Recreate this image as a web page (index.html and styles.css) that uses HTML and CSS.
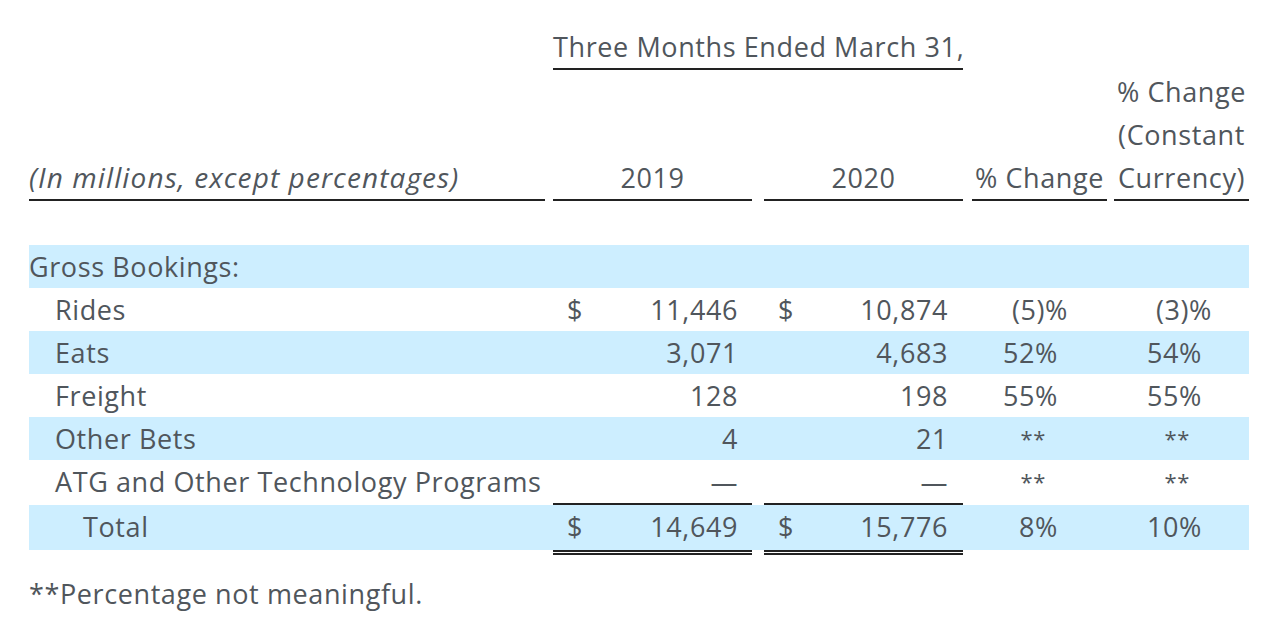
FILE: index.html
```html
<!DOCTYPE html>
<html lang="en">
<head>
<meta charset="utf-8">
<title>Gross Bookings</title>
<link rel="stylesheet" href="styles.css">
</head>
<body>
<div class="page">
  <div class="grid head">
    <div class="c lab"></div>
    <div class="c span2 ul center">Three Months Ended March 31,</div>
    <div class="c pct"></div>
    <div class="c ccy"></div>

    <div class="c lab ul italic">(In millions, except percentages)</div>
    <div class="c y1 ul center">2019</div>
    <div class="c y2 ul center">2020</div>
    <div class="c pct ul center">% Change</div>
    <div class="c ccy ul center">% Change<br>(Constant<br>Currency)</div>
  </div>

  <div class="spacer"></div>

  <div class="grid row blue">
    <div class="c lab">Gross Bookings:</div>
    <div class="c y1"></div>
    <div class="c y2"></div>
    <div class="c pct"></div>
    <div class="c ccy"></div>
  </div>

  <div class="grid row">
    <div class="c lab sub">Rides</div>
    <div class="c y1 num"><span>$</span><span>11,446</span></div>
    <div class="c y2 num"><span>$</span><span>10,874</span></div>
    <div class="c pct val"><span class="neg">(5)%</span></div>
    <div class="c ccy val"><span class="neg">(3)%</span></div>
  </div>

  <div class="grid row blue">
    <div class="c lab sub">Eats</div>
    <div class="c y1 num"><span></span><span>3,071</span></div>
    <div class="c y2 num"><span></span><span>4,683</span></div>
    <div class="c pct val"><span>52%</span></div>
    <div class="c ccy val"><span>54%</span></div>
  </div>

  <div class="grid row">
    <div class="c lab sub">Freight</div>
    <div class="c y1 num"><span></span><span>128</span></div>
    <div class="c y2 num"><span></span><span>198</span></div>
    <div class="c pct val"><span>55%</span></div>
    <div class="c ccy val"><span>55%</span></div>
  </div>

  <div class="grid row blue">
    <div class="c lab sub">Other Bets</div>
    <div class="c y1 num"><span></span><span>4</span></div>
    <div class="c y2 num"><span></span><span>21</span></div>
    <div class="c pct val"><span class="nm">**</span></div>
    <div class="c ccy val"><span class="nm">**</span></div>
  </div>

  <div class="grid row">
    <div class="c lab sub">ATG and Other Technology Programs</div>
    <div class="c y1 num ul"><span></span><span>—</span></div>
    <div class="c y2 num ul"><span></span><span>—</span></div>
    <div class="c pct val"><span class="nm">**</span></div>
    <div class="c ccy val"><span class="nm">**</span></div>
  </div>

  <div class="grid row blue total">
    <div class="c lab tot">Total</div>
    <div class="c y1 num dbl"><span>$</span><span>14,649</span></div>
    <div class="c y2 num dbl"><span>$</span><span>15,776</span></div>
    <div class="c pct val"><span>8%</span></div>
    <div class="c ccy val"><span>10%</span></div>
  </div>

  <p class="note">**Percentage not meaningful.</p>
</div>
</body>
</html>
```

FILE: styles.css
```css
html, body {
  margin: 0;
  padding: 0;
  background: #ffffff;
}

.page {
  padding: 25px 0 0 29px;
  font-family: "Open Sans", "Noto Sans", sans-serif;
  font-size: 27px;
  letter-spacing: 0.6px;
  line-height: 43px;
  color: #50565c;
}

.grid {
  display: grid;
  grid-template-columns: 524px 211px 208px 142px 135px;
  width: 1220px;
}

.head {
  align-items: end;
}

.c {
  white-space: nowrap;
}

.lab { margin-right: 8px; }
.y1 { margin-right: 12px; }
.y2 { margin-right: 9px; }
.pct { margin-right: 7px; }
.ccy { margin-right: 0; }

.span2 {
  grid-column: 2 / span 2;
  margin-right: 9px;
}

.ul {
  border-bottom: 2px solid #222222;
}

.center { text-align: center; }

.italic {
  font-style: italic;
  font-size: 28px;
  letter-spacing: 1.1px;
}

.spacer { height: 44px; }

.row { height: 43px; }
.row.blue { background: #cdeeff; }

.sub { padding-left: 26px; }
.tot { padding-left: 54px; }

.num {
  display: flex;
  justify-content: space-between;
  padding: 0 14px;
}
.y2.num { padding-right: 15px; }

.val {
  text-align: right;
}
.pct.val { padding-right: 49px; }
.ccy.val { padding-right: 47px; }

.neg { margin-right: -10px; }
.nm {
  margin-right: 12px;
  font-size: 22px;
  vertical-align: 4px;
}

.row.total {
  height: 45px;
  margin-top: 2px;
}

.dbl {
  border-bottom: 5px double #222222;
  margin-bottom: -5px;
}

.note {
  margin: 22px 0 0 0;
}
```
